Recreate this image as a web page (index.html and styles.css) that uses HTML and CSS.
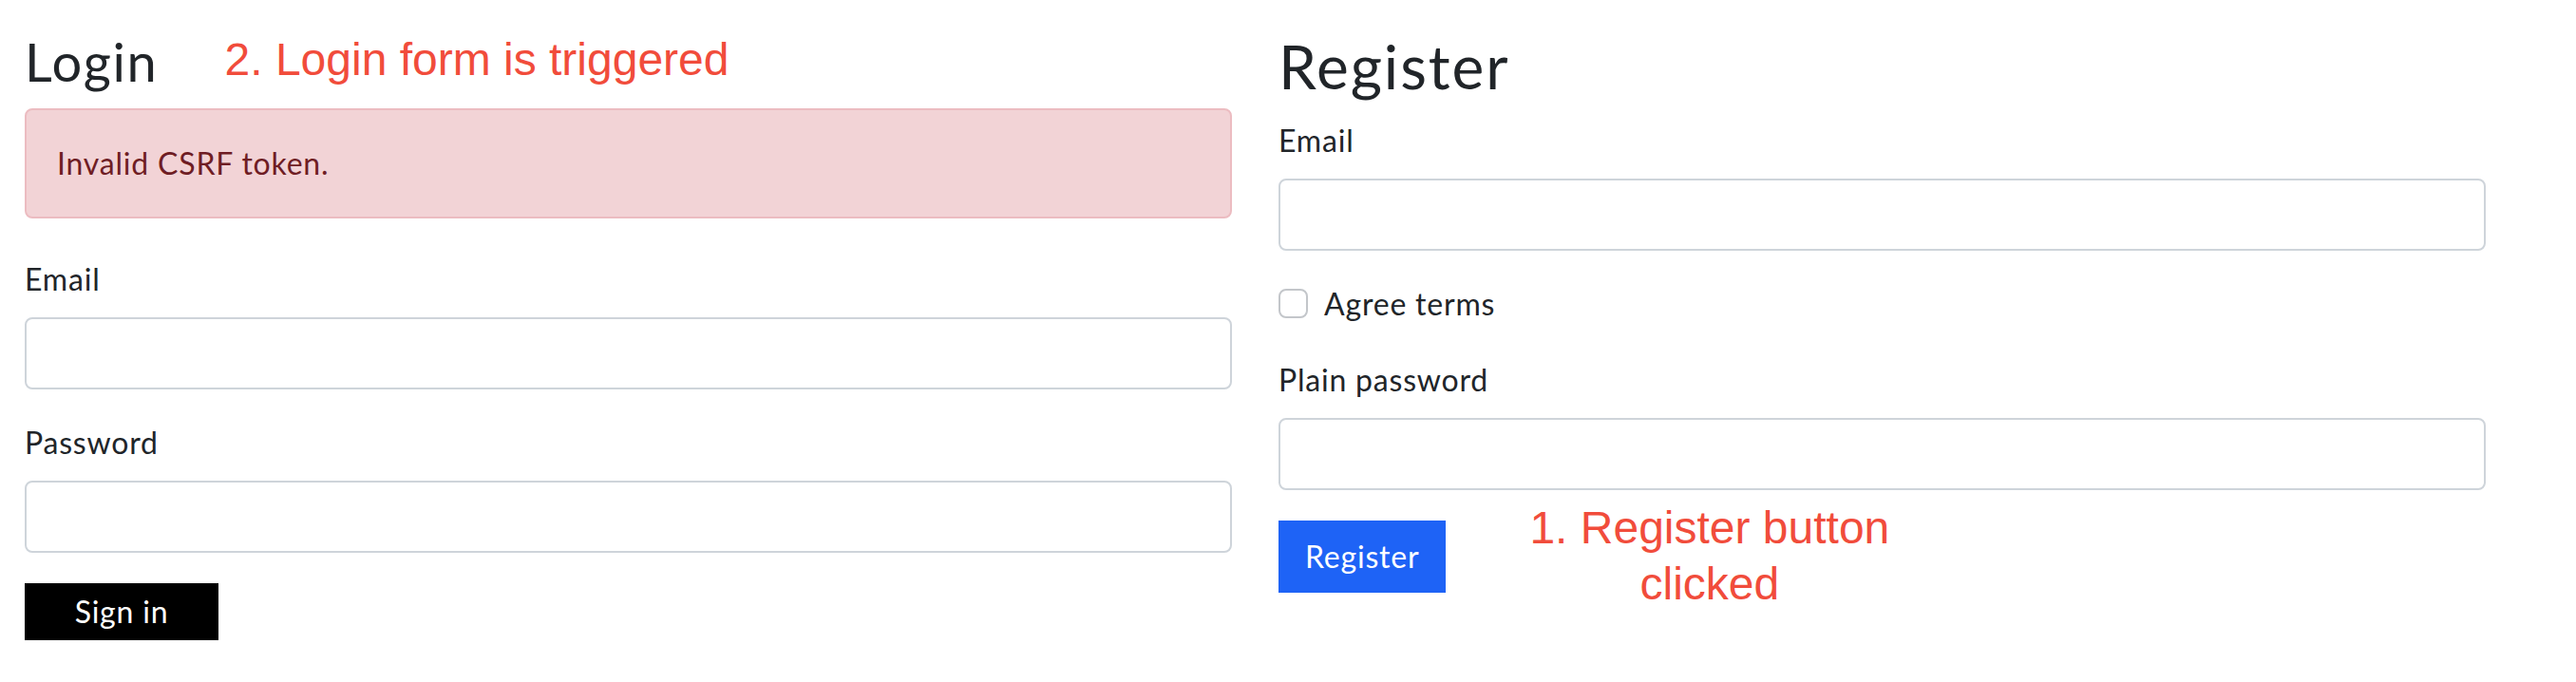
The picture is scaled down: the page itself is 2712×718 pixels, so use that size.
FILE: index.html
```html
<!DOCTYPE html>
<html lang="en">
<head>
<meta charset="utf-8">
<title>Login / Register</title>
<link rel="stylesheet" href="styles.css">
</head>
<body>
<div class="page">
  <section class="col">
    <div class="title-row">
      <h2 class="title title-login">Login</h2>
      <span class="note note-login">2. Login form is triggered</span>
    </div>
    <div class="alert">Invalid CSRF token.</div>
    <form class="form">
      <div class="field">
        <label class="label">Email</label>
        <input class="input" type="text">
      </div>
      <div class="field">
        <label class="label">Password</label>
        <input class="input" type="password">
      </div>
      <button class="btn btn-dark" type="button">Sign in</button>
    </form>
  </section>
  <section class="col">
    <h1 class="title title-register">Register</h1>
    <form class="form form-register">
      <div class="field">
        <label class="label">Email</label>
        <input class="input" type="text">
      </div>
      <div class="field check">
        <span class="check-box"></span>
        <span class="check-label">Agree terms</span>
      </div>
      <div class="field">
        <label class="label">Plain password</label>
        <input class="input" type="password">
      </div>
      <div class="btn-row">
        <button class="btn btn-blue" type="button">Register</button>
        <span class="note note-register">1. Register button<br>clicked</span>
      </div>
    </form>
  </section>
</div>
</body>
</html>
```
FILE: styles.css
```css
* { box-sizing: border-box; }
html, body { margin: 0; padding: 0; background: #fff; }
body {
  font-family: Lato, "Noto Sans", sans-serif;
  font-size: 32px;
  line-height: 48px;
  letter-spacing: 0.025em;
  color: #212529;
  width: 2712px;
  height: 718px;
  overflow: hidden;
}
.page {
  display: grid;
  grid-template-columns: 1271px 1271px;
  column-gap: 49px;
  padding: 31px 0 0 26px;
}
.col { display: flex; flex-direction: column; }
.title {
  margin: 0 0 16px 0;
  font-weight: 400;
  letter-spacing: 0.03em;
}
.title-login { font-size: 56px; line-height: 67px; }
.title-register { font-size: 64px; line-height: 77px; }
.title-row { display: flex; align-items: flex-start; }
.title-row .title { margin-bottom: 16px; }
.note {
  font-family: "Liberation Sans", Arial, sans-serif;
  color: #f14c3b;
  font-size: 48px;
  line-height: 59px;
  letter-spacing: 0;
}
.note-login { margin-left: 70px; margin-top: 2px; }
.alert {
  background: #f2d3d6;
  border: 2px solid #ecbcc1;
  border-radius: 8px;
  color: #6f1d24;
  padding: 32px;
  margin-bottom: 40px;
}
.form { display: flex; flex-direction: column; }
.field { display: flex; flex-direction: column; margin-bottom: 32px; }
.label { display: block; margin-bottom: 16px; }
.input {
  display: block;
  width: 100%;
  height: 76px;
  padding: 12px 24px;
  font: inherit;
  border: 2px solid #ced4da;
  border-radius: 8px;
  background: #fff;
}
.check { flex-direction: row; align-items: flex-start; }
.check-box {
  width: 31px;
  height: 31px;
  margin-top: 8px;
  border: 2px solid #c3c6ca;
  border-radius: 8px;
  background: #fff;
  flex: none;
}
.check-label { margin-left: 17px; }
.btn {
  font: inherit;
  letter-spacing: inherit;
  border: 0;
  border-radius: 0;
  color: #fff;
  cursor: pointer;
}
.btn-dark {
  align-self: flex-start;
  background: #000;
  width: 204px;
  height: 60px;
  padding: 0;
  line-height: 60px;
}
.btn-row { display: flex; align-items: flex-start; }
.btn-blue {
  background: #1e63f6;
  border: 2px solid #1e63f6;
  height: 76px;
  padding: 12px 26px;
  line-height: 48px;
}
.note-register {
  margin-top: -22px;
  margin-left: 88px;
  text-align: center;
}
```
